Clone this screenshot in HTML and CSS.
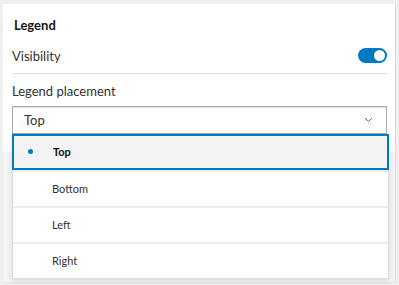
FILE: index.html
```html
<!DOCTYPE html>
<html lang="en">
<head>
    <meta charset="UTF-8">
    <title>Legend</title>
    <link rel="stylesheet" href="styles.css">
</head>
<body>
<div class="page">
    <div class="panel">
        <div class="panel-body">
            <div class="title">Legend</div>
            <div class="row">
                <span>Visibility</span>
                <span class="toggle"><span class="knob"></span></span>
            </div>
            <div class="field">
                <div class="label">Legend placement</div>
                <div class="select">
                    <span>Top</span>
                    <svg class="chevron" width="9" height="6" viewBox="0 0 9 6">
                        <path d="M1 1 L4.5 4.5 L8 1" fill="none" stroke="#6a6a6a" stroke-width="1"/>
                    </svg>
                </div>
            </div>
        </div>
        <div class="panel-rest"></div>
    </div>
    <ul class="menu">
        <li class="active"><span class="dot"></span>Top</li>
        <li>Bottom</li>
        <li>Left</li>
        <li>Right</li>
    </ul>
</div>
</body>
</html>
```

FILE: styles.css
```css
* {
    box-sizing: border-box;
}

body {
    margin: 0;
    background: #efefef;
    font-family: Lato, "Noto Sans", sans-serif;
    color: #323232;
}

.page {
    position: relative;
    height: 285px;
    padding: 4px 3px 2px 3px;
}

.panel {
    display: flex;
    flex-direction: column;
    height: 279px;
    border-right: 1px solid #dcdcdc;
}

.panel-body {
    background: #fff;
    height: 148px;
    padding: 0 8px 0 9px;
}

.panel-rest {
    flex: 1;
    background: #f5f5f5;
    border-bottom: 1px solid #e4e4e4;
}

.title {
    font-size: 13px;
    font-weight: bold;
    color: #151515;
    padding: 13px 0 0 2px;
    height: 36px;
}

.row {
    display: flex;
    justify-content: space-between;
    align-items: center;
    font-size: 13px;
    height: 34px;
    border-bottom: 1px solid #dedede;
    padding-bottom: 2px;
}

.toggle {
    display: flex;
    justify-content: flex-end;
    align-items: center;
    width: 29px;
    height: 15px;
    border-radius: 8px;
    background: #0079c1;
    padding: 0 2px;
}

.knob {
    width: 11px;
    height: 11px;
    border-radius: 50%;
    background: #fff;
}

.field {
    padding-top: 9px;
}

.label {
    font-size: 13px;
    height: 23px;
}

.select {
    display: flex;
    justify-content: space-between;
    align-items: center;
    height: 28px;
    border: 1px solid #a8a8a8;
    box-shadow: inset 0 1px 0 #e6e6e6;
    padding: 0 13px 0 11px;
    font-size: 13px;
}

.menu {
    position: absolute;
    left: 12px;
    top: 134px;
    width: 377px;
    margin: 0;
    padding: 0;
    list-style: none;
    background: #fff;
    border: 1px solid #dcdcdc;
    box-shadow: 0 2px 6px rgba(0, 0, 0, 0.12);
}

.menu li {
    display: flex;
    align-items: center;
    height: 36px;
    padding: 0 0 2px 39px;
    font-size: 11px;
    border-top: 2px solid #ececec;
}

.menu li:first-child {
    border-top: none;
}

.menu li.active {
    background: #f3f3f3;
    border: 2px solid #0079c1;
    margin: -1px -1px 0 -1px;
    padding-left: 14px;
    font-weight: bold;
    color: #151515;
}

.dot {
    width: 5px;
    height: 5px;
    border-radius: 50%;
    background: #0079c1;
    margin-right: 20px;
}
```
